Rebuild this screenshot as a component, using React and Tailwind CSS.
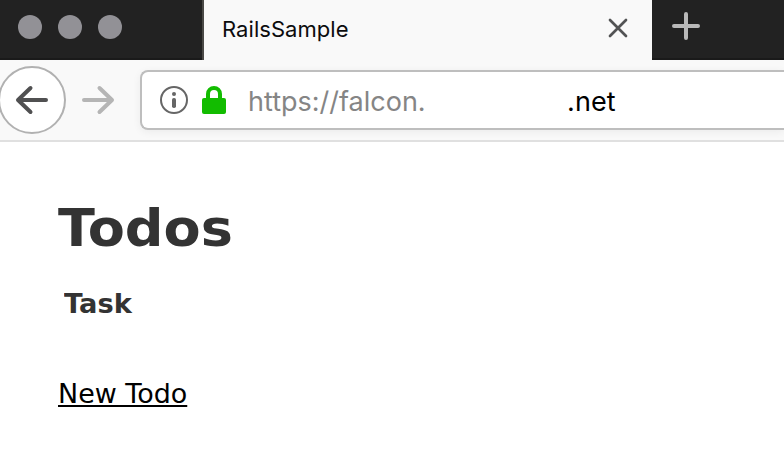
function TabStrip() {
  return (
    <div className="flex h-[60px] bg-[#222222]">
      <div className="flex w-[202px] items-start gap-4 border-b-2 border-[#1a1a1a] pl-[18px] pt-[15px]">
        <span className="size-6 rounded-full bg-[#929196]" />
        <span className="size-6 rounded-full bg-[#929196]" />
        <span className="size-6 rounded-full bg-[#929196]" />
      </div>
      <div className="flex w-[450px] items-start justify-between border-l-2 border-[#4a4946] bg-[#f9f9f9] pl-[18px] pr-6 pt-[14px]">
        <span className="whitespace-nowrap font-['Inter',sans-serif] text-[22px] leading-[30px] tracking-[0.05px] text-[#0c0c0d]">
          RailsSample
        </span>
        <svg className="mt-[4px] size-5" viewBox="0 0 20 20" fill="none" stroke="#525354" strokeWidth="2.7" strokeLinecap="round">
          <path d="M2 2L18 18M18 2L2 18" />
        </svg>
      </div>
      <div className="flex-1 border-b-2 border-[#1a1a1a] pl-5 pt-3">
        <svg className="size-7" viewBox="0 0 28 28" fill="none" stroke="#b9b9b9" strokeWidth="4" strokeLinecap="round">
          <path d="M14 2V26M2 14H26" />
        </svg>
      </div>
    </div>
  );
}

function Toolbar() {
  return (
    <div className="flex h-[82px] items-start overflow-hidden border-b-2 border-[#e0e0e0] bg-[#f9f9f9]">
      <svg className="mt-[5px] h-[70px] w-[140px] shrink-0" viewBox="0 0 140 70" fill="none" strokeLinecap="round" strokeLinejoin="round">
        <circle cx="32" cy="35" r="33" fill="#fff" stroke="#b1b1b1" strokeWidth="2" />
        <path d="M30.5 23L18 35L30.5 47M18.500 35H46" stroke="#505051" strokeWidth="4" />
        <path d="M99.500 23L112 35L99.500 47M111.500 35H84" stroke="#b5b5b5" strokeWidth="4" />
      </svg>
      <div className="mt-[10px] flex h-[60px] flex-1 items-start rounded-l-lg border-2 border-r-0 border-[#bebebe] bg-white pl-[18px] pt-[14px] shadow-[0_2px_8px_rgba(0,0,0,0.06)]">
        <svg className="size-7 shrink-0" viewBox="0 0 28 28">
          <circle cx="14" cy="14" r="13" fill="none" stroke="#666" strokeWidth="2" />
          <circle cx="14" cy="8" r="2" fill="#666" />
          <rect x="12" y="12" width="4" height="10" rx="1.8" fill="#666" />
        </svg>
        <svg className="ml-[14px] h-7 w-6 shrink-0" viewBox="0 0 24 28">
          <path d="M6 13V8a6 6 0 0 1 12 0v5" fill="none" stroke="#12bc00" strokeWidth="4" />
          <rect y="12" width="24" height="16" rx="2" fill="#12bc00" />
        </svg>
        <div className="ml-[22px] mt-px flex whitespace-nowrap font-['Inter',sans-serif] text-[27px] leading-[30px]">
          <span className="w-[319px] text-[#858585]">https://falcon.</span>
          <span className="tracking-[0.1px] text-black">.net</span>
        </div>
      </div>
    </div>
  );
}

export default function App() {
  return (
    <div className="h-[476px] w-[784px] overflow-hidden bg-white">
      <TabStrip />
      <Toolbar />
      <main className="flex flex-col items-start pl-[58px] pt-[54px] font-['DejaVu_Sans',sans-serif]">
        <h1 className="origin-left scale-x-[1.04] text-[52px] font-bold leading-[64px] text-[#333]">Todos</h1>
        <div className="ml-[6px] mt-[26px] origin-left scale-x-[1.05] text-[26px] font-bold leading-[36px] text-[#333]">Task</div>
        <a href="#new" className="mt-[54px] origin-left scale-x-[1.036] text-[26px] leading-[36px] text-black underline decoration-2 underline-offset-[2px]">
          New Todo
        </a>
      </main>
    </div>
  );
}
